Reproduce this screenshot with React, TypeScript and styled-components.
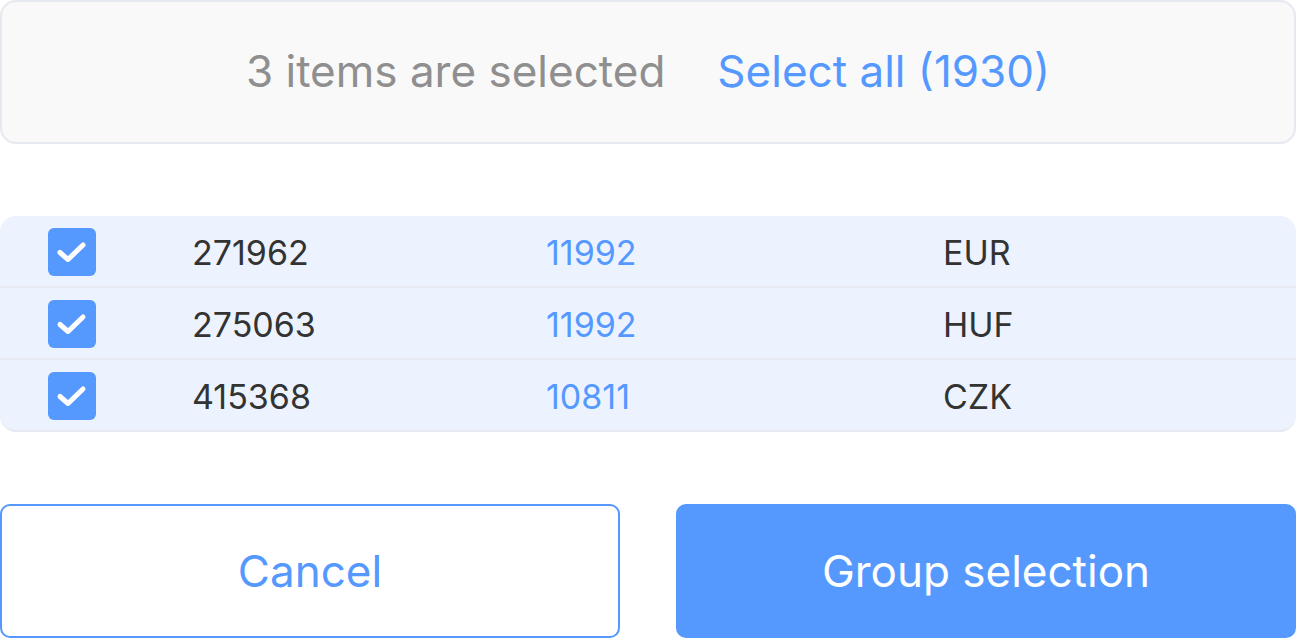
import React from "react";
import styled, { createGlobalStyle } from "styled-components";

const Global = createGlobalStyle`
  html, body { margin: 0; padding: 0; background: #ffffff; }
  body { font-family: "Inter", "Noto Sans", sans-serif; }
  * { box-sizing: border-box; }
`;

const Page = styled.div`
  width: 1296px;
  height: 639px;
  display: flex;
  flex-direction: column;
`;

const Banner = styled.div`
  height: 144px;
  border: 2px solid #e6e9ef;
  border-radius: 16px;
  background: #f9f9f9;
  display: flex;
  align-items: center;
  justify-content: center;
  gap: 52px;
  font-size: 44px;
  padding-bottom: 2px;
`;

const Count = styled.span`
  color: #8f8f8f;
`;

const LinkText = styled.span`
  color: #5599ff;
  cursor: pointer;
`;

const Table = styled.div`
  margin-top: 72px;
  background: #ecf3fe;
  border-radius: 16px;
  border-bottom: 2px solid #e6e9ef;
  overflow: hidden;
  display: flex;
  flex-direction: column;
`;

const Row = styled.div<{ $last?: boolean }>`
  height: ${(p) => (p.$last ? 70 : 72)}px;
  display: grid;
  grid-template-columns: 144px 354px 397px 1fr;
  align-items: center;
  padding-left: 48px;
  padding-top: 2px;
  border-bottom: ${(p) => (p.$last ? "none" : "2px solid #e6e9ef")};
  font-size: 34px;
`;

const Check = styled.div`
  width: 48px;
  height: 48px;
  border-radius: 6px;
  background: #5599ff;
  display: flex;
  align-items: center;
  justify-content: center;
`;

const Cell = styled.span<{ $link?: boolean }>`
  color: ${(p) => (p.$link ? "#5599ff" : "#333333")};
`;

const Actions = styled.div`
  margin-top: 72px;
  display: grid;
  grid-template-columns: 1fr 1fr;
  gap: 56px;
`;

const Button = styled.button<{ $primary?: boolean }>`
  height: 134px;
  border-radius: 10px;
  border: 2px solid #5599ff;
  background: ${(p) => (p.$primary ? "#5599ff" : "#ffffff")};
  color: ${(p) => (p.$primary ? "#ffffff" : "#5599ff")};
  font-family: "Inter", "Noto Sans", sans-serif;
  font-size: 44px;
  cursor: pointer;
`;

const rows = [
  { id: "271962", ref: "11992", cur: "EUR" },
  { id: "275063", ref: "11992", cur: "HUF" },
  { id: "415368", ref: "10811", cur: "CZK" },
];

export default function App() {
  return (
    <Page>
      <Global />
      <Banner>
        <Count>3 items are selected</Count>
        <LinkText>Select all (1930)</LinkText>
      </Banner>
      <Table>
        {rows.map((r, i) => (
          <Row key={r.id} $last={i === rows.length - 1}>
            <Check>
              <svg width="32" height="24" viewBox="0 0 32 24" fill="none">
                <path d="M4 12.5 L12 19.5 L27 5" stroke="#fff" strokeWidth="5" strokeLinecap="round" strokeLinejoin="round" />
              </svg>
            </Check>
            <Cell>{r.id}</Cell>
            <Cell $link>{r.ref}</Cell>
            <Cell>{r.cur}</Cell>
          </Row>
        ))}
      </Table>
      <Actions>
        <Button>Cancel</Button>
        <Button $primary>Group selection</Button>
      </Actions>
    </Page>
  );
}
